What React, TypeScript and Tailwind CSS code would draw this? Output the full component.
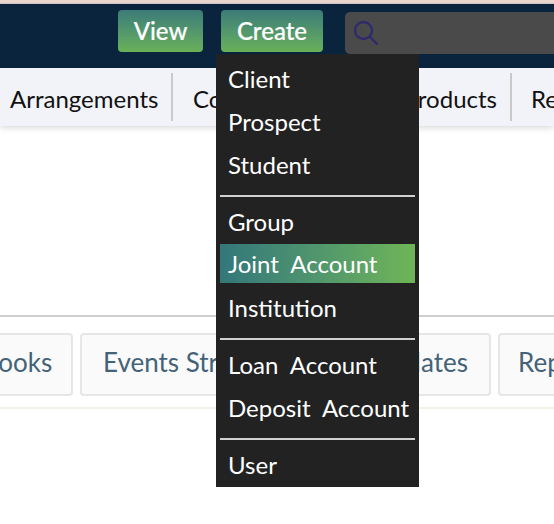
const Item = ({ label, active, drop }: { label: string; active?: boolean; drop?: boolean }) => (
  <li
    className={`flex items-end h-[39px] mb-[4px] pl-[8px] text-[24px] leading-[30px] text-white [word-spacing:6px] ${
      drop ? "pb-[3px]" : "pb-[4px]"
    } ${active ? "bg-gradient-to-r from-[#33777a] to-[#6fb555]" : ""}`}
  >
    {label}
  </li>
);

const Sep = ({ wide }: { wide?: boolean }) => (
  <li className={`h-[2px] mb-[4px] bg-[#d0d0d0] ${wide ? "mt-[12px]" : "mt-[11px]"}`} />
);

const Tab = ({ label, className }: { label: string; className: string }) => (
  <div
    className={`h-[63px] shrink-0 flex items-center pb-[4px] whitespace-nowrap overflow-hidden border-2 border-[#e6e6e6] rounded-[4px] bg-[#fafafa] text-[#436278] text-[26px] ${className}`}
  >
    {label}
  </div>
);

export default function App() {
  return (
    <div className="relative w-[554px] h-[524px] overflow-hidden bg-white font-['Lato',sans-serif]">
      <div className="h-[4px] bg-[#e8d6cd] border-b border-[#cfc4bf]" />
      <header className="h-[64px] bg-[#0a243d] flex items-start pl-[118px] pt-[6px]">
        <button className="w-[85px] h-[42px] rounded-[4px] bg-gradient-to-b from-[#3c7b78] to-[#6ab157] text-white text-[24px] font-medium [-webkit-text-stroke:0.2px_white]">
          View
        </button>
        <button className="ml-[18px] w-[102px] h-[42px] rounded-[4px] bg-gradient-to-b from-[#3c7b78] to-[#6ab157] text-white text-[24px] font-medium [-webkit-text-stroke:0.2px_white]">
          Create
        </button>
        <div className="ml-[22px] mt-[2px] flex-1 h-[42px] rounded-tl-[5px] rounded-bl-[5px] bg-[#4a4a4a] flex items-center pl-[8px]">
          <svg width="26" height="26" viewBox="0 0 26 26" fill="none" stroke="#2f2a6b" strokeWidth="2.4" strokeLinecap="round">
            <circle cx="10.5" cy="10.5" r="8.5" />
            <path d="M17 17 L24 24" />
          </svg>
        </div>
      </header>
      <nav className="h-[58px] bg-[#f1f3f9] flex items-center pl-[10px] text-[24px] text-[#111] whitespace-nowrap shadow-[0_2px_6px_rgba(0,0,0,0.15)]">
        <span className="w-[163px] h-[48px] flex items-center pt-[3px] border-r-2 border-[#c9c9c9] shrink-0">Arrangements</span>
        <span className="w-[339px] h-[48px] flex items-center pt-[3px] pl-[20px] border-r-2 border-[#c9c9c9] shrink-0 justify-between pr-[13px]">
          <span>Contracts</span>
          <span>Products</span>
        </span>
        <span className="pl-[19px] pt-[3px] shrink-0">Reports</span>
      </nav>
      <div className="mt-[189px] h-[2px] bg-[#cfcfcf]" />
      <div className="mt-[16px] flex gap-[7px] -ml-[89px]">
        <Tab label="Passbooks" className="w-[162px] pl-[20px]" />
        <Tab label="Events Stream" className="w-[250px] pl-[21px]" />
        <Tab label="Templates" className="w-[154px] pl-[14px]" />
        <Tab label="Reports" className="w-[160px] pl-[18px]" />
      </div>
      <div className="mt-[11px] h-[2px] bg-[#f3f3e8]" />
      <ul className="absolute left-[216px] top-[54px] w-[203px] h-[433px] bg-[#222222] pt-[5px] px-[4px]">
        <Item label="Client" />
        <Item label="Prospect" />
        <Item label="Student" />
        <Sep />
        <Item label="Group" drop />
        <Item label="Joint Account" active />
        <Item label="Institution" drop />
        <Sep wide />
        <Item label="Loan Account" drop />
        <Item label="Deposit Account" drop />
        <Sep wide />
        <Item label="User" drop />
      </ul>
    </div>
  );
}
